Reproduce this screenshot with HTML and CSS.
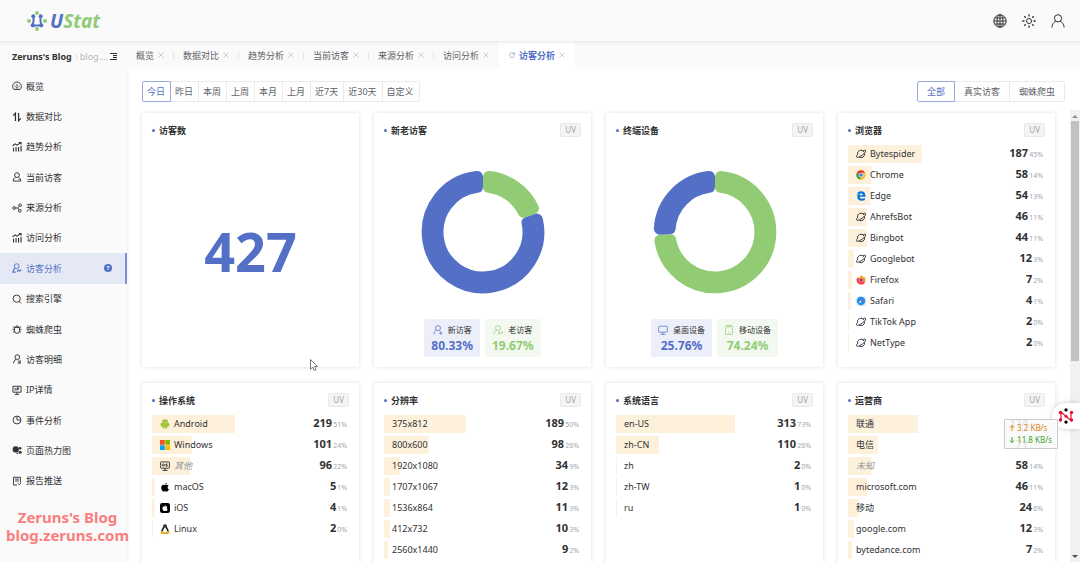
FILE: index.html
```html
<!DOCTYPE html>
<html lang="zh-CN">
<head>
    <meta charset="UTF-8">
    <meta name="viewport" content="width=device-width, initial-scale=1.0">
    <title>UStat</title>
    <link rel="stylesheet" href="styles.css">
</head>
<body>
    <svg class="sprite" aria-hidden="true">
        <symbol id="i-dash" viewBox="0 0 16 16"><path d="M3 13.500a7 7 0 1 1 10 0z"/><path d="M8 9V5M4 8.500h1.500M10.500 8.500H12M6 11h4"/></symbol>
        <symbol id="i-sort" viewBox="0 0 16 16"><path d="M2 5.500L5.500 2v12.500M10.500 1.500V14L14 10.500" stroke-width="2"/></symbol>
        <symbol id="i-trend" viewBox="0 0 16 16"><path d="M1 6l4-3 3 2 6-4M11 1h3.500v3M2.500 15V9M6.500 15V8M10.500 15V8M14.500 15V6" stroke-width="1.800"/></symbol>
        <symbol id="i-user" viewBox="0 0 16 16"><circle cx="8" cy="5" r="3.800"/><path d="M5.500 8.500C3 10 2 12 2 14.500h12c0-2.500-1-4.500-3.500-6M10.500 12h1.500"/></symbol>
        <symbol id="i-share" viewBox="0 0 16 16"><circle cx="3.500" cy="8" r="2.200"/><circle cx="13" cy="3.500" r="2"/><circle cx="12.500" cy="12.500" r="2.200"/><path d="M5.700 8H9l2.500-3M9 8l2 3"/></symbol>
        <symbol id="i-visitor" viewBox="0 0 16 16"><circle cx="7.500" cy="5" r="3.800"/><path d="M5 8.500C2.500 10 1.500 12 1.500 14.500H6M8 14l2.500-3 2 2L15 10.500" stroke-width="1.800"/></symbol>
        <symbol id="i-search" viewBox="0 0 16 16"><circle cx="7.500" cy="7.500" r="5.800"/><path d="M11.500 12l3 3"/></symbol>
        <symbol id="i-bug" viewBox="0 0 16 16"><path d="M4 5.500h8V11a4 4 0 0 1-8 0zM5.500 5.500a2.500 2.500 0 0 1 5 0M4 8.500H1M4 6L1.500 4M4 11.500l-2.500 2M12 8.500h3M12 6l2.500-2M12 11.500l2.500 2"/></symbol>
        <symbol id="i-detail" viewBox="0 0 16 16"><circle cx="8.500" cy="5" r="3.800"/><path d="M6.500 8.500C4 10 2.500 12 2.500 15M9 10.500l4 4M9 14.500h5M13 9.500v5"/></symbol>
        <symbol id="i-ip" viewBox="0 0 16 16"><path d="M1.500 2h13v9.500h-13zM8 11.500V15M4.500 15h7M5 4.500v4.500M8 9V4.500h2.500v2.300H8"/></symbol>
        <symbol id="i-pie" viewBox="0 0 16 16"><circle cx="8" cy="8" r="6.300"/><path d="M8 2v6h6"/></symbol>
        <symbol id="i-heat" viewBox="0 0 16 16"><g fill="currentColor" stroke="none"><circle cx="6" cy="7" r="5"/><circle cx="13" cy="5" r="2"/><circle cx="13" cy="11.500" r="2.500"/><circle cx="8.500" cy="13.500" r="1.200"/></g></symbol>
        <symbol id="i-report" viewBox="0 0 16 16"><path d="M2.500 2h11v8.500M2.500 2v12.500H8M5 5h6M5 8h6M9.500 11.500l2 2.500 3-3"/></symbol>
        <symbol id="i-new" viewBox="0 0 16 16"><circle cx="8" cy="5" r="4"/><path d="M5.500 8C3 9.500 1.500 12 1.500 15M10.500 9l1.500 1M12.500 10.500v5M10 13h5"/></symbol>
        <symbol id="i-old" viewBox="0 0 16 16"><circle cx="8" cy="5" r="4"/><path d="M5.500 8C3 9.500 1.500 12 1.500 15M15 9.500v3.500H8.500M10.500 10.500L8 13l2.500 2"/></symbol>
        <symbol id="i-pc" viewBox="0 0 16 16"><rect x="1" y="2" width="14" height="9.500" rx="1"/><path d="M8 11.500V15M4 15h8"/></symbol>
        <symbol id="i-phone" viewBox="0 0 16 16"><rect x="2.500" y="1" width="11" height="14" rx="1"/><path d="M5.500 1v2h5V1M8 11v2"/></symbol>
        <symbol id="i-planet" viewBox="0 0 16 16"><path d="M2.500 9A5.600 5.600 0 0 1 12.600 4.500M13.600 7A5.600 5.600 0 0 1 5 12.900"/><path d="M11.500 2.500c2.500-1 4-.7 4 .5 0 2.500-4 6-7.500 8-4 2.500-7.500 3-7.500 1C.5 11 1.500 9.800 2.800 8.600"/></symbol>
        <symbol id="i-chrome" viewBox="0 0 16 16"><g stroke="none"><circle cx="8" cy="8" r="7.500" fill="#fbc116"/><path fill="#e33b2e" d="M1.500 4.250a7.500 7.500 0 0 1 13 0H8L5 9.700z"/><path fill="#31a350" d="M1.500 4.250L5 9.700l3 2-1.500 3.700A7.500 7.500 0 0 1 1.500 4.250z"/><circle cx="8" cy="8" r="3.800" fill="#fff"/><circle cx="8" cy="8" r="2.900" fill="#3a7ff0"/></g></symbol>
        <symbol id="i-edge" viewBox="0 0 16 16"><path stroke="none" fill="#0078d7" d="M.8 7.200C1.300 3 4.300.5 8.200.5c4.500 0 7 3.300 7 7.200v1.600H5.700c.2 2 2 3 4 3 1.700 0 3.200-.5 4.500-1.300v3.300c-1.500.8-3.300 1.200-5.200 1.200-4.200 0-7-2.600-7-6.500 0-2.600 1.400-4.700 3.600-5.800C3.500 3.700 1.800 5 .8 7.200zm5-.6h5c0-1.800-.9-2.700-2.400-2.700S6 5 5.800 6.600z"/></symbol>
        <symbol id="i-firefox" viewBox="0 0 16 16"><g stroke="none"><path fill="#ff9a1f" d="M1 8c0-2 .7-3.500 1.700-4.600L4 5l2-1.200C7 1.600 8.500.8 9.500.5c0 1.500 1 2.200 2.500 3.300l.5-1.300C14.500 4 15.200 6 15.200 8A7.100 7.100 0 0 1 1 8z"/><path fill="#ff3b55" d="M1 8c0-1.500.4-2.800 1-3.800L5 6l-.5 3c1 2.500 4 3.500 7.500 1.500l2.500.5A7.100 7.100 0 0 1 1 8z"/><circle cx="8.300" cy="8" r="2.600" fill="#7a3fd0"/></g></symbol>
        <symbol id="i-safari" viewBox="0 0 16 16"><g stroke="none"><rect x=".5" y=".5" width="15" height="15" rx="4" fill="#dfe3e8"/><circle cx="8" cy="8" r="6.700" fill="#1e90f0"/><path fill="#fff" d="M4 12l3-5 2 2z"/><path fill="#f2554a" d="M12 4L7 7l2 2z"/></g></symbol>
        <symbol id="i-android" viewBox="0 0 16 16"><g stroke="none" fill="#a4c43e"><path d="M3 5.500a5 5 0 0 1 10 0zM3 6h10v7H3zM1 6.500h2v5H1zM13 6.500h2v5h-2zM5 12h2.200v3.500H5zM8.800 12H11v3.500H8.800z"/><path d="M4.500.8l1.500 2M11.500.8l-1.500 2" stroke="#a4c43e" stroke-width=".8"/></g></symbol>
        <symbol id="i-windows" viewBox="0 0 16 16"><g stroke="none"><path fill="#f25022" d="M0 0h7.600v7.600H0z"/><path fill="#7fba00" d="M8.400 0H16v7.600H8.400z"/><path fill="#00a4ef" d="M0 8.400h7.600V16H0z"/><path fill="#ffb900" d="M8.400 8.400H16V16H8.400z"/></g></symbol>
        <symbol id="i-os" viewBox="0 0 16 16"><rect x="1" y="1.500" width="14" height="10" rx="1"/><circle cx="5.500" cy="6.500" r="1.700"/><path d="M11.800 4.800H9.500v1.700h2v1.800H9M8 11.500V15M4 15h8"/></symbol>
        <symbol id="i-apple" viewBox="0 0 16 16"><path stroke="none" fill="currentColor" d="M10.800 1c0 1.500-1.200 3-2.700 3 0-1.500 1.200-2.800 2.700-3zM8.200 4.900c.8 0 1.500-.6 2.600-.6 1.200 0 2.300.6 3 1.600-2.400 1.500-2 4.800.5 5.800-.6 1.500-1.900 3.600-3.200 3.600-1 0-1.500-.6-2.700-.6s-1.700.6-2.700.6C3.800 15.300 2 11.800 2 9.200c0-3 1.800-4.800 3.700-4.800 1.100 0 1.900.5 2.500.5z"/></symbol>
        <symbol id="i-ios" viewBox="0 0 16 16"><rect width="16" height="16" rx="3.500" fill="currentColor" stroke="none"/><path stroke="none" fill="#fff" d="M9.800 3c0 1-.8 2-1.800 2 0-1 .8-1.900 1.800-2zM8.100 5.600c.5 0 1-.4 1.800-.4s1.500.4 2 1.100c-1.600 1-1.300 3.200.3 3.900-.4 1-1.200 2.400-2.100 2.400-.7 0-1-.4-1.900-.4s-1.200.4-1.800.4c-1.100 0-2.400-2.300-2.400-4 0-2 1.200-3.300 2.500-3.300.7 0 1.200.3 1.600.3z"/></symbol>
        <symbol id="i-linux" viewBox="0 0 16 16"><g stroke="none"><path fill="#222" d="M8 .3c2 0 2.900 1.400 2.900 3.400 0 2.300 3.300 4.500 3.300 9 0 1.500-1.500 2.500-3 2.500H4.800c-1.500 0-3-1-3-2.500 0-4.500 3.300-6.700 3.300-9C5.100 1.700 6 .3 8 .3z"/><path fill="#fff" d="M8 5.500c1.800 1 3.200 4 3.200 6 0 1.800-1.500 2.700-3.200 2.700s-3.200-1-3.200-2.700c0-2 1.400-5 3.200-6z"/><path fill="#f5b800" d="M6.300 4.200h3.400L8 6zM3 10.500l3.500 3.500-1 2-5-1zM13 10.500L9.500 14l1 2 5-1z"/></g></symbol>
    </svg>

    <header class="topbar">
        <a class="logo" href="#">
            <svg viewBox="0 0 20 20" width="20" height="20">
                <g fill="#91cc75"><circle cx="10" cy="2" r="2"/><circle cx="2" cy="10" r="2"/><circle cx="18" cy="10" r="2"/><circle cx="10" cy="18" r="2"/></g>
                <path d="M6.500 5v5.500L5.500 14.500H14.500L13.500 10.500V5" fill="none" stroke="#5470c6" stroke-width="2"/>
                <g fill="#5470c6"><circle cx="6.300" cy="5.200" r="2"/><circle cx="13.700" cy="5.200" r="2"/><circle cx="5.800" cy="14.300" r="2.100"/><circle cx="14.200" cy="14.300" r="2.100"/></g>
            </svg>
            <span class="logo-text">U<em>Stat</em></span>
        </a>
        <div class="tools">
            <button aria-label="语言"><svg viewBox="0 0 14 14"><circle cx="7" cy="7" r="6.200"/><ellipse cx="7" cy="7" rx="3" ry="6.200"/><path d="M7 .8v12.400M.8 7h12.400M1.700 4h10.600M1.700 10h10.600"/></svg></button>
            <button aria-label="主题"><svg viewBox="0 0 14 14"><circle cx="7" cy="7" r="2.500"/><path d="M7 .3v2.200M7 11.500v2.200M.3 7h2.200M11.500 7h2.200M2.300 2.300l1.500 1.500M10.200 10.200l1.500 1.500M2.300 11.700l1.500-1.500M10.200 3.800l1.500-1.500" stroke-width="1.300"/></svg></button>
            <button aria-label="用户"><svg viewBox="0 0 14 14"><circle cx="7" cy="4.300" r="3.600"/><path d="M.9 13.500c.1-3 1.500-5 3.900-6.200M13.100 13.500c-.1-3-1.500-5-3.900-6.200"/></svg></button>
        </div>
    </header>

    <div class="layout">
        <aside class="sidebar">
            <div class="site">
                <strong>Zeruns's Blog</strong>
                <span class="site-url">blog....</span>
                <svg class="site-menu" viewBox="0 0 8 8"><path d="M0 1.500h7M3 3.500h4M3 5.500h4M0 7.500h7"/></svg>
            </div>
            <nav class="menu">
                <a href="#"><svg class="icon"><use href="#i-dash"/></svg>概览</a>
                <a href="#"><svg class="icon"><use href="#i-sort"/></svg>数据对比</a>
                <a href="#"><svg class="icon"><use href="#i-trend"/></svg>趋势分析</a>
                <a href="#"><svg class="icon"><use href="#i-user"/></svg>当前访客</a>
                <a href="#"><svg class="icon"><use href="#i-share"/></svg>来源分析</a>
                <a href="#"><svg class="icon"><use href="#i-trend"/></svg>访问分析</a>
                <a href="#" class="active"><svg class="icon"><use href="#i-visitor"/></svg>访客分析<span class="help">?</span></a>
                <a href="#"><svg class="icon"><use href="#i-search"/></svg>搜索引擎</a>
                <a href="#"><svg class="icon"><use href="#i-bug"/></svg>蜘蛛爬虫</a>
                <a href="#"><svg class="icon"><use href="#i-detail"/></svg>访客明细</a>
                <a href="#"><svg class="icon"><use href="#i-ip"/></svg>IP详情</a>
                <a href="#"><svg class="icon"><use href="#i-pie"/></svg>事件分析</a>
                <a href="#"><svg class="icon"><use href="#i-heat"/></svg>页面热力图</a>
                <a href="#"><svg class="icon"><use href="#i-report"/></svg>报告推送</a>
            </nav>
        </aside>

        <main class="main">
            <nav class="tabs">
                <div class="tab"><a href="#">概览</a><button class="close" aria-label="关闭"><svg viewBox="0 0 6 6"><path d="M.5.5l5 5M5.500.5l-5 5"/></svg></button></div>
                <div class="tab"><a href="#">数据对比</a><button class="close" aria-label="关闭"><svg viewBox="0 0 6 6"><path d="M.5.5l5 5M5.500.5l-5 5"/></svg></button></div>
                <div class="tab"><a href="#">趋势分析</a><button class="close" aria-label="关闭"><svg viewBox="0 0 6 6"><path d="M.5.5l5 5M5.500.5l-5 5"/></svg></button></div>
                <div class="tab"><a href="#">当前访客</a><button class="close" aria-label="关闭"><svg viewBox="0 0 6 6"><path d="M.5.5l5 5M5.500.5l-5 5"/></svg></button></div>
                <div class="tab"><a href="#">来源分析</a><button class="close" aria-label="关闭"><svg viewBox="0 0 6 6"><path d="M.5.5l5 5M5.500.5l-5 5"/></svg></button></div>
                <div class="tab"><a href="#">访问分析</a><button class="close" aria-label="关闭"><svg viewBox="0 0 6 6"><path d="M.5.5l5 5M5.500.5l-5 5"/></svg></button></div>
                <div class="tab active"><svg class="reload" viewBox="0 0 12 12"><path d="M10.500 4A5 5 0 1 0 11 7M11 1v3.500H7.500"/></svg><a href="#">访客分析</a><button class="close" aria-label="关闭"><svg viewBox="0 0 6 6"><path d="M.5.5l5 5M5.500.5l-5 5"/></svg></button></div>
            </nav>

            <div class="filters">
                <div class="btn-group">
                    <button class="active">今日</button>
                    <button>昨日</button>
                    <button>本周</button>
                    <button>上周</button>
                    <button>本月</button>
                    <button>上月</button>
                    <button>近7天</button>
                    <button>近30天</button>
                    <button>自定义</button>
                </div>
                <div class="btn-group wide">
                    <button class="active">全部</button>
                    <button>真实访客</button>
                    <button>蜘蛛爬虫</button>
                </div>
            </div>

            <div class="scroll">
                <div class="cards">
                    <section class="card">
                        <div class="card-head"><h2>访客数</h2></div>
                        <div class="total">427</div>
                    </section>

                    <section class="card">
                        <div class="card-head"><h2>新老访客</h2><span class="unit">UV</span></div>
                        <svg class="donut" viewBox="-62 -62 124 124">
                            <path class="green" d="M6-54.970A55.300 55.300 0 0 1 49.940-23.740L40.620-20.490A45.500 45.500 0 0 0 6-45.100z"/>
                            <path class="blue" d="M53.880-12.400A55.300 55.300 0 1 1-6-54.970V-45.100A45.500 45.500 0 1 0 44.560-9.160z"/>
                        </svg>
                        <div class="legend">
                            <div class="chip blue"><span class="chip-name"><svg class="icon"><use href="#i-new"/></svg>新访客</span><strong>80.33%</strong></div>
                            <div class="chip green"><span class="chip-name"><svg class="icon"><use href="#i-old"/></svg>老访客</span><strong>19.67%</strong></div>
                        </div>
                    </section>

                    <section class="card">
                        <div class="card-head"><h2>终端设备</h2><span class="unit">UV</span></div>
                        <svg class="donut" viewBox="-62 -62 124 124">
                            <path class="green" d="M6-54.970A55.300 55.300 0 1 1-54.620 8.620L-44.760 8.150A45.500 45.500 0 1 0 6-45.100z"/>
                            <path class="blue" d="M-55.200-3.360A55.300 55.300 0 0 1-6-54.970V-45.100A45.500 45.500 0 0 0-45.340-3.840z"/>
                        </svg>
                        <div class="legend">
                            <div class="chip blue"><span class="chip-name"><svg class="icon"><use href="#i-pc"/></svg>桌面设备</span><strong>25.76%</strong></div>
                            <div class="chip green"><span class="chip-name"><svg class="icon"><use href="#i-phone"/></svg>移动设备</span><strong>74.24%</strong></div>
                        </div>
                    </section>

                    <section class="card">
                        <div class="card-head"><h2>浏览器</h2><span class="unit">UV</span></div>
                        <table class="rank">
                            <tr style="--pct: 45"><td><svg class="icon"><use href="#i-planet"/></svg>Bytespider</td><td><b>187</b><small>45%</small></td></tr>
                            <tr style="--pct: 14"><td><svg class="icon"><use href="#i-chrome"/></svg>Chrome</td><td><b>58</b><small>14%</small></td></tr>
                            <tr style="--pct: 13"><td><svg class="icon"><use href="#i-edge"/></svg>Edge</td><td><b>54</b><small>13%</small></td></tr>
                            <tr style="--pct: 11"><td><svg class="icon"><use href="#i-planet"/></svg>AhrefsBot</td><td><b>46</b><small>11%</small></td></tr>
                            <tr style="--pct: 11"><td><svg class="icon"><use href="#i-planet"/></svg>Bingbot</td><td><b>44</b><small>11%</small></td></tr>
                            <tr style="--pct: 3"><td><svg class="icon"><use href="#i-planet"/></svg>Googlebot</td><td><b>12</b><small>3%</small></td></tr>
                            <tr style="--pct: 2"><td><svg class="icon"><use href="#i-firefox"/></svg>Firefox</td><td><b>7</b><small>2%</small></td></tr>
                            <tr style="--pct: 1"><td><svg class="icon"><use href="#i-safari"/></svg>Safari</td><td><b>4</b><small>1%</small></td></tr>
                            <tr style="--pct: 0"><td><svg class="icon"><use href="#i-planet"/></svg>TikTok App</td><td><b>2</b><small>0%</small></td></tr>
                            <tr style="--pct: 0"><td><svg class="icon"><use href="#i-planet"/></svg>NetType</td><td><b>2</b><small>0%</small></td></tr>
                        </table>
                    </section>

                    <section class="card">
                        <div class="card-head"><h2>操作系统</h2><span class="unit">UV</span></div>
                        <table class="rank">
                            <tr style="--pct: 51"><td><svg class="icon"><use href="#i-android"/></svg>Android</td><td><b>219</b><small>51%</small></td></tr>
                            <tr style="--pct: 24"><td><svg class="icon"><use href="#i-windows"/></svg>Windows</td><td><b>101</b><small>24%</small></td></tr>
                            <tr style="--pct: 23"><td><svg class="icon"><use href="#i-os"/></svg><i>其他</i></td><td><b>96</b><small>22%</small></td></tr>
                            <tr style="--pct: 1"><td><svg class="icon black"><use href="#i-apple"/></svg>macOS</td><td><b>5</b><small>1%</small></td></tr>
                            <tr style="--pct: 1"><td><svg class="icon black"><use href="#i-ios"/></svg>iOS</td><td><b>4</b><small>1%</small></td></tr>
                            <tr style="--pct: 0"><td><svg class="icon"><use href="#i-linux"/></svg>Linux</td><td><b>2</b><small>0%</small></td></tr>
                        </table>
                    </section>

                    <section class="card">
                        <div class="card-head"><h2>分辨率</h2><span class="unit">UV</span></div>
                        <table class="rank">
                            <tr style="--pct: 50"><td>375x812</td><td><b>189</b><small>50%</small></td></tr>
                            <tr style="--pct: 27"><td>800x600</td><td><b>98</b><small>26%</small></td></tr>
                            <tr style="--pct: 9"><td>1920x1080</td><td><b>34</b><small>9%</small></td></tr>
                            <tr style="--pct: 3"><td>1707x1067</td><td><b>12</b><small>3%</small></td></tr>
                            <tr style="--pct: 3"><td>1536x864</td><td><b>11</b><small>3%</small></td></tr>
                            <tr style="--pct: 3"><td>412x732</td><td><b>10</b><small>3%</small></td></tr>
                            <tr style="--pct: 2"><td>2560x1440</td><td><b>9</b><small>2%</small></td></tr>
                        </table>
                    </section>

                    <section class="card">
                        <div class="card-head"><h2>系统语言</h2><span class="unit">UV</span></div>
                        <table class="rank">
                            <tr style="--pct: 73"><td>en-US</td><td><b>313</b><small>73%</small></td></tr>
                            <tr style="--pct: 26"><td>zh-CN</td><td><b>110</b><small>26%</small></td></tr>
                            <tr style="--pct: 0"><td>zh</td><td><b>2</b><small>0%</small></td></tr>
                            <tr style="--pct: 0"><td>zh-TW</td><td><b>1</b><small>0%</small></td></tr>
                            <tr style="--pct: 0"><td>ru</td><td><b>1</b><small>0%</small></td></tr>
                        </table>
                    </section>

                    <section class="card">
                        <div class="card-head"><h2>运营商</h2><span class="unit">UV</span></div>
                        <table class="rank">
                            <tr style="--pct: 43"><td>联通</td><td><b>174</b><small>43%</small></td></tr>
                            <tr style="--pct: 18"><td>电信</td><td><b>71</b><small>18%</small></td></tr>
                            <tr style="--pct: 14"><td><i>未知</i></td><td><b>58</b><small>14%</small></td></tr>
                            <tr style="--pct: 11"><td>microsoft.com</td><td><b>46</b><small>11%</small></td></tr>
                            <tr style="--pct: 6"><td>移动</td><td><b>24</b><small>6%</small></td></tr>
                            <tr style="--pct: 3"><td>google.com</td><td><b>12</b><small>3%</small></td></tr>
                            <tr style="--pct: 2"><td>bytedance.com</td><td><b>7</b><small>2%</small></td></tr>
                        </table>
                    </section>
                </div>
                <div class="scrollbar" aria-hidden="true">
                    <span class="arrow up"></span>
                    <span class="thumb"></span>
                    <span class="arrow down"></span>
                </div>
            </div>
        </main>
    </div>

    <div class="watermark">Zeruns's Blog<br>blog.zeruns.com</div>

    <button class="float-btn" aria-label="工具">
        <svg viewBox="0 0 16 16" width="16" height="16">
            <path d="M3 12.500V4l10 8.500V4" fill="none" stroke="#e60f2d" stroke-width="1.200"/>
            <g fill="#e60f2d"><circle cx="2.500" cy="4.500" r="1.700"/><circle cx="2.500" cy="12" r="1.700"/><circle cx="13.500" cy="4.500" r="1.700"/><circle cx="13.500" cy="12" r="1.700"/><circle cx="8" cy="8.200" r="1.500"/></g>
            <circle cx="8" cy="1.900" r="1.700"/><circle cx="8" cy="14.100" r="1.700"/>
        </svg>
    </button>
    <div class="speed">
        <div class="up"><svg viewBox="0 0 6 8"><path d="M3 7V1.500M1 3.500l2-2 2 2"/></svg>3.2 KB/s</div>
        <div class="down"><svg viewBox="0 0 6 8"><path d="M3 1v5.500M1 4.500l2 2 2-2"/></svg>11.8 KB/s</div>
    </div>
    <svg class="cursor" viewBox="0 0 9 12"><path d="M.5.5v9.700l2.200-2 1.500 3.200 1.700-.8L4.500 7.500h3z"/></svg>
</body>
</html>
```

FILE: styles.css
```css
* {
    box-sizing: border-box;
}
body {
    margin: 0;
    height: 100vh;
    display: flex;
    flex-direction: column;
    overflow: hidden;
    font-family: 'Noto Sans', 'Noto Sans CJK SC', sans-serif;
    font-size: 9px;
    color: #303133;
    background: #fff;
}
a {
    color: inherit;
    text-decoration: none;
}
button {
    font: inherit;
    color: inherit;
    padding: 0;
    border: none;
    background: none;
    cursor: pointer;
}
svg {
    display: block;
}
.sprite {
    position: absolute;
    width: 0;
    height: 0;
}
.icon {
    width: 10px;
    height: 10px;
    flex: none;
    fill: none;
    stroke: currentColor;
    stroke-width: 1.5;
}
.icon.black {
    color: #000;
}

/* Header */
.topbar {
    flex: none;
    height: 41px;
    padding: 0 15px 0 27px;
    display: flex;
    align-items: center;
    justify-content: space-between;
    background: #fafafa;
    box-shadow: 0 0 5px rgba(0, 0, 0, 0.14);
    position: relative;
    z-index: 2;
}
.logo {
    display: flex;
    align-items: center;
    gap: 3px;
}
.logo-text {
    font-size: 19px;
    line-height: 24px;
    font-weight: 700;
    font-style: italic;
    color: #5470c6;
}
.logo-text em {
    color: #91cc75;
}
.tools {
    display: flex;
    gap: 15px;
}
.tools svg {
    width: 14px;
    height: 14px;
    fill: none;
    stroke: #303133;
}

/* Sidebar */
.layout {
    flex: 1;
    min-height: 0;
    display: flex;
}
.sidebar {
    flex: none;
    width: 127px;
    display: flex;
    flex-direction: column;
    padding-bottom: 66px;
    background: #fafafa;
    box-shadow: 0 0 3px rgba(0, 0, 0, 0.12);
}
.site {
    height: 30px;
    padding: 0 9px 0 12px;
    display: flex;
    align-items: center;
}
.site-url {
    margin-left: 4px;
    padding-left: 4px;
    line-height: 9px;
    background: linear-gradient(#ddd, #ddd) left center / 1px 5px no-repeat;
    color: #b4b6ba;
}
.site-menu {
    width: 8px;
    height: 8px;
    margin-left: auto;
    fill: none;
    stroke: #303133;
}
.menu {
    flex: 1;
    display: flex;
    flex-direction: column;
}
.menu a {
    flex: 1;
    display: flex;
    align-items: center;
    gap: 4px;
    padding: 0 15px 0 12px;
}
.menu a.active {
    padding-right: 13px;
    color: #5470c6;
    background: #e5e9f6;
    border-right: 2px solid #7c92d6;
}
.help {
    width: 8px;
    height: 8px;
    margin-left: auto;
    border-radius: 50%;
    font-size: 6px;
    line-height: 8px;
    font-weight: 700;
    text-align: center;
    color: #fff;
    background: #5470c6;
}

/* Tabs */
.main {
    flex: 1;
    min-width: 0;
    display: flex;
    flex-direction: column;
}
.tabs {
    flex: none;
    height: 28px;
    display: flex;
    background: #fafafa;
    color: #5f6266;
}
.tab {
    display: flex;
    align-items: center;
    gap: 4px;
    padding: 0 10px 0 9px;
    background: linear-gradient(#e4e4e4, #e4e4e4) right center / 1px 7px no-repeat;
}
.tab:nth-last-child(2) {
    background: none;
}
.tab.active {
    padding: 0 10px;
    color: #5470c6;
    font-weight: 700;
    background: #fff;
}
.close svg {
    width: 6px;
    height: 6px;
    fill: none;
    stroke: #b8babd;
    stroke-width: 0.7;
}
.reload {
    width: 6px;
    height: 6px;
    fill: none;
    stroke: #5470c6;
}

/* Filters */
.filters {
    flex: none;
    display: flex;
    justify-content: space-between;
    padding: 12px 15px 8px;
}
.btn-group {
    display: flex;
}
.btn-group button {
    height: 21px;
    padding: 0 5px 0 4px;
    border: 1px solid #ebebeb;
    color: #606266;
}
.btn-group.wide button {
    padding: 0 9px;
}
.btn-group button + button {
    margin-left: -1px;
}
.btn-group button:first-child {
    border-radius: 2px 0 0 2px;
}
.btn-group button:last-child {
    border-radius: 0 2px 2px 0;
}
.btn-group button.active {
    color: #5470c6;
    border-color: #98a9dd;
    z-index: 1;
}

/* Cards */
.scroll {
    flex: 1;
    min-height: 0;
    display: flex;
    overflow: hidden;
}
.cards {
    flex: 1;
    display: grid;
    grid-template-columns: repeat(4, 1fr);
    grid-auto-rows: 254px;
    gap: 16px 15px;
    padding: 3px 15px 0;
}
.card {
    display: flex;
    flex-direction: column;
    padding: 10px;
    border-radius: 2px;
    background: #fff;
    box-shadow: 0 0 5px rgba(0, 0, 0, 0.12);
}
.card-head {
    display: flex;
    align-items: center;
    justify-content: space-between;
    height: 14px;
}
.card-head h2 {
    display: flex;
    align-items: center;
    gap: 4px;
    margin: 0;
    font-size: 9px;
    font-weight: 700;
}
.card-head h2::before {
    content: '';
    width: 3px;
    height: 3px;
    border-radius: 50%;
    background: #5470c6;
}
.unit {
    padding: 0 4px;
    border: 1px solid #e9e9eb;
    border-radius: 2px;
    font-size: 8px;
    line-height: 12px;
    color: #a4a6aa;
    background: #f4f4f5;
}
.total {
    flex: 1;
    display: flex;
    align-items: center;
    justify-content: center;
    padding-top: 8px;
    font-size: 54px;
    font-weight: 700;
    color: #5470c6;
}

/* Donut charts */
.donut {
    width: 124px;
    height: 124px;
    margin: auto auto 25px;
}
.donut path {
    stroke-width: 12;
    stroke-linejoin: round;
}
.donut .blue {
    fill: #5470c6;
    stroke: #5470c6;
}
.donut .green {
    fill: #91cc75;
    stroke: #91cc75;
}
.legend {
    display: flex;
    justify-content: center;
    gap: 5px;
}
.chip {
    display: flex;
    flex-direction: column;
    align-items: center;
    padding: 4px 7px 3px;
    border-radius: 2px;
}
.chip.blue {
    color: #5470c6;
    background: #eceff9;
}
.chip.green {
    color: #91cc75;
    background: #f3f9f0;
}
.chip-name {
    display: flex;
    align-items: center;
    gap: 5px;
    font-size: 8px;
    line-height: 14px;
    color: #303133;
}
.chip .icon {
    stroke-width: 1.2;
}
.chip.blue .icon {
    color: #5470c6;
}
.chip.green .icon {
    color: #91cc75;
}
.chip strong {
    font-size: 12px;
    line-height: 17px;
}

/* Rank tables */
.rank {
    width: 100%;
    margin-top: 5px;
    border-spacing: 0 3px;
}
.rank tr {
    background: linear-gradient(#fef1dc, #fef1dc) no-repeat;
    background-size: calc(var(--pct) * 0.82% + 1px) 100%;
}
.rank td {
    height: 18px;
    padding: 0 0 0 8px;
    line-height: 14px;
    white-space: nowrap;
}
.rank td:last-child {
    padding: 0 2px 0 0;
    text-align: right;
}
.rank .icon {
    display: inline-block;
    margin-right: 4px;
    vertical-align: -2px;
}
.rank b {
    font-size: 11px;
}
.rank small {
    margin-left: 1px;
    font-size: 7px;
    color: #a4a6aa;
}
.rank i {
    color: #909399;
}

/* Scrollbar */
.scrollbar {
    width: 10px;
    display: flex;
    flex-direction: column;
    align-items: center;
    padding: 4px 0;
    background: #f1f1f1;
}
.thumb {
    width: 8px;
    height: 240px;
    margin: 3px 0 auto;
    background: #c1c1c1;
}
.arrow {
    border: 3px solid transparent;
}
.arrow.up {
    border-top: none;
    border-bottom: 3px solid #909090;
    margin-top: 1px;
}
.arrow.down {
    border-bottom: none;
    border-top: 3px solid #505050;
}

/* Overlays */
.watermark {
    position: absolute;
    left: 6px;
    bottom: 18px;
    z-index: 3;
    font-size: 15px;
    line-height: 18px;
    font-weight: 700;
    text-align: center;
    color: #fa7e7e;
}
.float-btn {
    position: absolute;
    top: 403px;
    right: 0;
    width: 28px;
    height: 26px;
    padding-left: 6px;
    border-radius: 13px 0 0 13px;
    background: #fff;
    box-shadow: 0 0 5px rgba(0, 0, 0, 0.2);
}
.speed {
    position: absolute;
    top: 419px;
    right: 22px;
    padding: 2px 5px 2px 4px;
    border: 1px solid #ccc;
    border-radius: 1px;
    font-size: 8px;
    line-height: 12px;
    background: rgba(250, 250, 250, 0.9);
}
.speed div {
    display: flex;
    align-items: center;
    gap: 2px;
}
.speed svg {
    width: 6px;
    height: 8px;
    fill: none;
    stroke: currentColor;
}
.speed .up {
    color: #dd841c;
}
.speed .down {
    color: #3aa52a;
}
.cursor {
    position: absolute;
    left: 310px;
    top: 359px;
    width: 9px;
    height: 12px;
    fill: #fff;
    stroke: #555;
    stroke-width: 0.8;
}
```
